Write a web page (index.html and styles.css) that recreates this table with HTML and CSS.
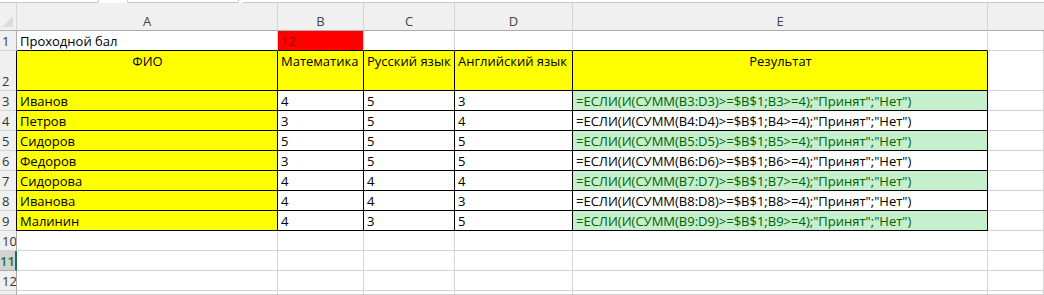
FILE: index.html
```html
<!DOCTYPE html>
<html lang="ru">
<head>
<meta charset="utf-8">
<title>Excel</title>
<link rel="stylesheet" href="styles.css">
</head>
<body>
<div class="topstrip">
  <span class="seg s1"></span><span class="gap g1"></span><span class="seg s2"></span><span class="gap g2"></span><span class="seg s3"></span>
</div>
<div class="sheet">
  <div class="corner"><span class="tri"></span></div>
  <div class="colh">A</div>
  <div class="colh">B</div>
  <div class="colh">C</div>
  <div class="colh">D</div>
  <div class="colh">E</div>
  <div class="colh last"></div>

  <div class="rowh bk">1</div>
  <div class="c bb">Проходной бал</div>
  <div class="c bb red">12</div>
  <div class="c bb"></div>
  <div class="c bb"></div>
  <div class="c bb"></div>
  <div class="c"></div>

  <div class="rowh tall bk">2</div>
  <div class="c box yel top center">ФИО</div>
  <div class="c box yel top">Математика</div>
  <div class="c box yel top">Русский язык</div>
  <div class="c box yel top">Английский язык</div>
  <div class="c box yel top center">Результат</div>
  <div class="c"></div>

  <div class="rowh bk">3</div>
  <div class="c box yel">Иванов</div>
  <div class="c box">4</div>
  <div class="c box">5</div>
  <div class="c box">3</div>
  <div class="c box good">=ЕСЛИ(И(СУММ(B3:D3)&gt;=$B$1;B3&gt;=4);"Принят";"Нет")</div>
  <div class="c"></div>

  <div class="rowh bk">4</div>
  <div class="c box yel">Петров</div>
  <div class="c box">3</div>
  <div class="c box">5</div>
  <div class="c box">4</div>
  <div class="c box">=ЕСЛИ(И(СУММ(B4:D4)&gt;=$B$1;B4&gt;=4);"Принят";"Нет")</div>
  <div class="c"></div>

  <div class="rowh bk">5</div>
  <div class="c box yel">Сидоров</div>
  <div class="c box">5</div>
  <div class="c box">5</div>
  <div class="c box">5</div>
  <div class="c box good">=ЕСЛИ(И(СУММ(B5:D5)&gt;=$B$1;B5&gt;=4);"Принят";"Нет")</div>
  <div class="c"></div>

  <div class="rowh bk">6</div>
  <div class="c box yel">Федоров</div>
  <div class="c box">3</div>
  <div class="c box">5</div>
  <div class="c box">5</div>
  <div class="c box">=ЕСЛИ(И(СУММ(B6:D6)&gt;=$B$1;B6&gt;=4);"Принят";"Нет")</div>
  <div class="c"></div>

  <div class="rowh bk">7</div>
  <div class="c box yel">Сидорова</div>
  <div class="c box">4</div>
  <div class="c box">4</div>
  <div class="c box">4</div>
  <div class="c box good">=ЕСЛИ(И(СУММ(B7:D7)&gt;=$B$1;B7&gt;=4);"Принят";"Нет")</div>
  <div class="c"></div>

  <div class="rowh bk">8</div>
  <div class="c box yel">Иванова</div>
  <div class="c box">4</div>
  <div class="c box">4</div>
  <div class="c box">3</div>
  <div class="c box">=ЕСЛИ(И(СУММ(B8:D8)&gt;=$B$1;B8&gt;=4);"Принят";"Нет")</div>
  <div class="c"></div>

  <div class="rowh bk">9</div>
  <div class="c box yel">Малинин</div>
  <div class="c box">4</div>
  <div class="c box">3</div>
  <div class="c box">5</div>
  <div class="c box good">=ЕСЛИ(И(СУММ(B9:D9)&gt;=$B$1;B9&gt;=4);"Принят";"Нет")</div>
  <div class="c"></div>

  <div class="rowh">10</div>
  <div class="c"></div><div class="c"></div><div class="c"></div><div class="c"></div><div class="c"></div><div class="c"></div>

  <div class="rowh sel">11</div>
  <div class="c"></div><div class="c"></div><div class="c"></div><div class="c"></div><div class="c"></div><div class="c"></div>

  <div class="rowh">12</div>
  <div class="c"></div><div class="c"></div><div class="c"></div><div class="c"></div><div class="c"></div><div class="c"></div>

  <div class="rowh"></div>
  <div class="c"></div><div class="c"></div><div class="c"></div><div class="c"></div><div class="c"></div><div class="c"></div>
</div>
</body>
</html>
```

FILE: styles.css
```css
* { box-sizing: border-box; }
html, body {
  margin: 0;
  padding: 0;
  background: #ffffff;
  overflow: hidden;
}
body {
  width: 1044px;
  height: 295px;
  font-family: "Open Sans", "Liberation Sans", sans-serif;
  font-size: 13px;
  color: #000;
}
.topstrip {
  display: flex;
  height: 3px;
  background: #fff;
}
.topstrip .seg { height: 3px; border-bottom: 1px solid #c8c8c8; }
.topstrip .gap { height: 3px; }
.s1 { width: 98px; }
.g1 { width: 30px; border-left: 1px solid #d0d0d0; border-right: 1px solid #d0d0d0; }
.s2 { width: 110px; }
.g2 { width: 5px; border-left: 1px solid #d0d0d0; }
.s3 { flex: 1; }

.sheet {
  display: grid;
  grid-template-columns: 17px 261px 86px 91px 118px 415px 1fr;
  grid-template-rows: 28px 20px 40px repeat(10, 20px) 4px;
  overflow: hidden;
}
.corner {
  background: #f0f0f0;
  border-right: 1px solid #d5d5d5;
  border-bottom: 1px solid #ababab;
  position: relative;
}
.tri {
  position: absolute;
  right: 3px;
  bottom: 3px;
  width: 0;
  height: 0;
  border-left: 11px solid transparent;
  border-bottom: 11px solid #dcdcdc;
}
.colh {
  background: #f0f0f0;
  border-right: 1px solid #d5d5d5;
  border-bottom: 1px solid #ababab;
  display: flex;
  align-items: flex-end;
  justify-content: center;
  padding-bottom: 0;
  color: #444;
  font-size: 13px;
  line-height: 18px;
}
.colh.last { border-right: none; }
.rowh {
  background: #f0f0f0;
  border-right: 1px solid #ababab;
  border-bottom: 1px solid #d5d5d5;
  display: flex;
  align-items: flex-end;
  padding-left: 2px;
  color: #333;
  font-size: 13px;
  line-height: 18px;
  overflow: hidden;
}
.rowh.sel {
  background: #d2d2d2;
  color: #217346;
  font-weight: 600;
  border-right: 2px solid #217346;
  border-bottom-color: #ababab;
  padding-left: 0;
}
.c {
  border-right: 1px solid #d4d4d4;
  border-bottom: 1px solid #d4d4d4;
  display: flex;
  align-items: flex-end;
  padding: 0 2px 0 3px;
  white-space: nowrap;
  overflow: visible;
  line-height: 18px;
}
.c.bb { border-bottom-color: #000; }
.c.box {
  border-right-color: #000;
  border-bottom-color: #000;
}
.rowh.bk + .c.box { border-left: 1px solid #000; margin-left: -1px; }
.yel { background: #ffff00; }
.red { background: #ff0000; color: #9c0006; }
.top { align-items: flex-start; padding-top: 1px; }
.center { justify-content: center; }
.good { background: #c6efce; color: #006100; }
```
